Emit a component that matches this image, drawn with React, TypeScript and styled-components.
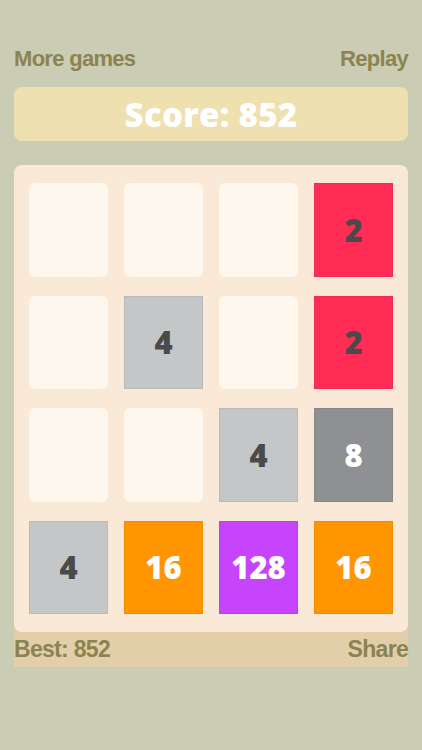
import React from 'react';
import styled, { createGlobalStyle } from 'styled-components';

const GlobalStyle = createGlobalStyle`
    html, body {
        margin: 0;
        padding: 0;
        background: #cbccb4;
    }
    body {
        font-family: 'Liberation Sans', Arial, sans-serif;
    }
`

const Page = styled.div`
    width: 422px;
    min-height: 750px;
    box-sizing: border-box;
    padding: 44px 14px 0;
    background: #cbccb4;
`
const TopBar = styled.div`
    height: 30px;
    display: flex;
    align-items: center;
    justify-content: space-between;
`
const LinkText = styled.span<{ size?: number }>`
    font-family: 'Liberation Sans', Arial, sans-serif;
    font-weight: 700;
    font-size: ${p => p.size || 22}px;
    letter-spacing: -0.7px;
    color: #8a8452;
    line-height: 1;
`
const ScoreBar = styled.div`
    margin-top: 13px;
    height: 54px;
    border-radius: 8px;
    background: #efe0b0;
    display: flex;
    align-items: center;
    justify-content: center;
    font-family: 'Open Sans', sans-serif;
    font-weight: 800;
    font-size: 33px;
    color: #ffffff;
    letter-spacing: 0.3px;
`
const Board = styled.div`
    position: relative;
    z-index: 1;
    margin-top: 24px;
    box-sizing: border-box;
    padding: 18px 15px;
    border-radius: 8px;
    background: #fae9d6;
    display: grid;
    grid-template-columns: repeat(4, 79px);
    grid-auto-rows: 93.5px;
    column-gap: 16px;
    row-gap: 19px;
`
const Tile = styled.div<{ bg: string; fg: string; empty?: boolean }>`
    display: flex;
    align-items: center;
    justify-content: center;
    background: ${p => p.bg};
    color: ${p => p.fg};
    border-radius: ${p => (p.empty ? '6px' : '0')};
    box-shadow: ${p => (p.empty ? 'none' : 'inset 0 0 0 1px rgba(0,0,0,0.06)')};
    font-family: 'Open Sans', sans-serif;
    font-weight: 800;
    font-size: 31px;
`
const Footer = styled.div`
    margin-top: -8px;
    padding-top: 8px;
    height: 35px;
    background: #e2cea8;
    display: flex;
    align-items: center;
    justify-content: space-between;
`

const tileColors: { [k: number]: [string, string] } = {
    0: ['#fff8ee', 'transparent'],
    2: ['#ff2d55', '#4a4a4a'],
    4: ['#c4c6c8', '#4a4a4a'],
    8: ['#8e9093', '#ffffff'],
    16: ['#ff9500', '#ffffff'],
    128: ['#c644fc', '#ffffff'],
}

const grid = [
    [0, 0, 0, 2],
    [0, 4, 0, 2],
    [0, 0, 4, 8],
    [4, 16, 128, 16],
]

export default function App() {
    return (
        <Page>
            <GlobalStyle />
            <TopBar>
                <LinkText>More games</LinkText>
                <LinkText>Replay</LinkText>
            </TopBar>
            <ScoreBar>Score: 852</ScoreBar>
            <Board>
                {grid.flat().map((v, i) => {
                    const [bg, fg] = tileColors[v];
                    return (
                        <Tile key={i} bg={bg} fg={fg} empty={v === 0}>
                            {v > 0 ? v : ''}
                        </Tile>
                    );
                })}
            </Board>
            <Footer>
                <LinkText size={23}>Best: 852</LinkText>
                <LinkText size={23}>Share</LinkText>
            </Footer>
        </Page>
    );
}
